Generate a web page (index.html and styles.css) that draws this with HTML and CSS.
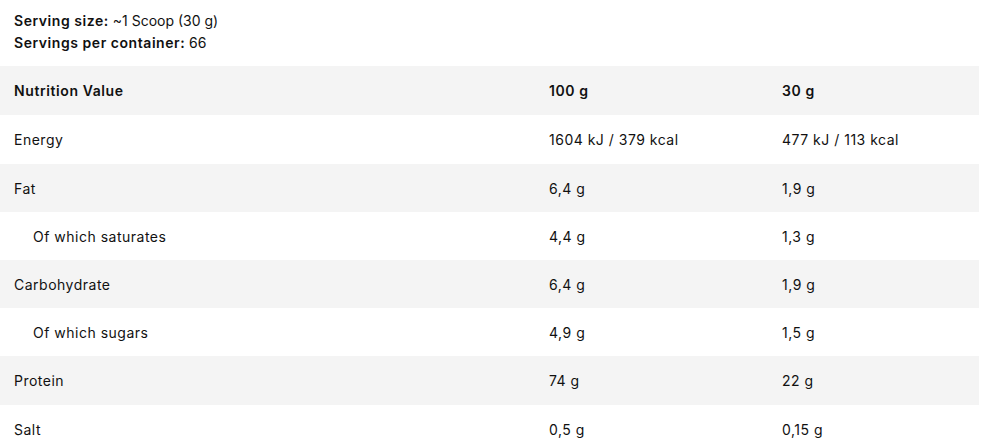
FILE: index.html
```html
<!DOCTYPE html>
<html lang="en">
<head>
<meta charset="utf-8">
<title>Nutrition</title>
<link rel="stylesheet" href="styles.css">
</head>
<body>
<div class="page">
  <div class="serving">
    <div><strong>Serving size:</strong> ~1 Scoop (30 g)</div>
    <div><strong>Servings per container:</strong> 66</div>
  </div>
  <table class="nutri">
    <colgroup>
      <col class="c1"><col class="c2"><col class="c3">
    </colgroup>
    <thead>
      <tr class="shade"><th>Nutrition Value</th><th>100 g</th><th>30 g</th></tr>
    </thead>
    <tbody>
      <tr><td>Energy</td><td>1604 kJ / 379 kcal</td><td>477 kJ / 113 kcal</td></tr>
      <tr class="shade"><td>Fat</td><td>6,4 g</td><td>1,9 g</td></tr>
      <tr><td class="sub">Of which saturates</td><td>4,4 g</td><td>1,3 g</td></tr>
      <tr class="shade"><td>Carbohydrate</td><td>6,4 g</td><td>1,9 g</td></tr>
      <tr><td class="sub">Of which sugars</td><td>4,9 g</td><td>1,5 g</td></tr>
      <tr class="shade"><td>Protein</td><td>74 g</td><td>22 g</td></tr>
      <tr><td>Salt</td><td>0,5 g</td><td>0,15 g</td></tr>
    </tbody>
  </table>
</div>
</body>
</html>
```
FILE: styles.css
```css
html, body {
  margin: 0;
  padding: 0;
  background: #fff;
}
body {
  font-family: Inter, "Open Sans", sans-serif;
  font-size: 14px;
  color: #111;
}
.page {
  width: 979px;
}
.serving {
  padding: 10px 14px 0;
  line-height: 22px;
  margin-bottom: 12px;
}
.serving strong {
  font-weight: 600;
  letter-spacing: 0.55px;
}
.nutri {
  width: 979px;
  border-collapse: collapse;
  table-layout: fixed;
}
.c1 { width: 535px; }
.c2 { width: 233px; }
.c3 { width: 211px; }
.nutri th, .nutri td {
  padding: 14px 14px;
  text-align: left;
  vertical-align: middle;
}
.nutri th {
  font-weight: 600;
  letter-spacing: 0.6px;
  line-height: 20.4px;
  padding-top: 15px;
  padding-bottom: 14px;
}
.nutri td {
  font-weight: 400;
  letter-spacing: 0.5px;
  line-height: 20.2px;
  padding-top: 15px;
  padding-bottom: 13px;
}
.shade {
  background: #f4f4f4;
}
.nutri td.sub {
  padding-left: 33px;
}
```
